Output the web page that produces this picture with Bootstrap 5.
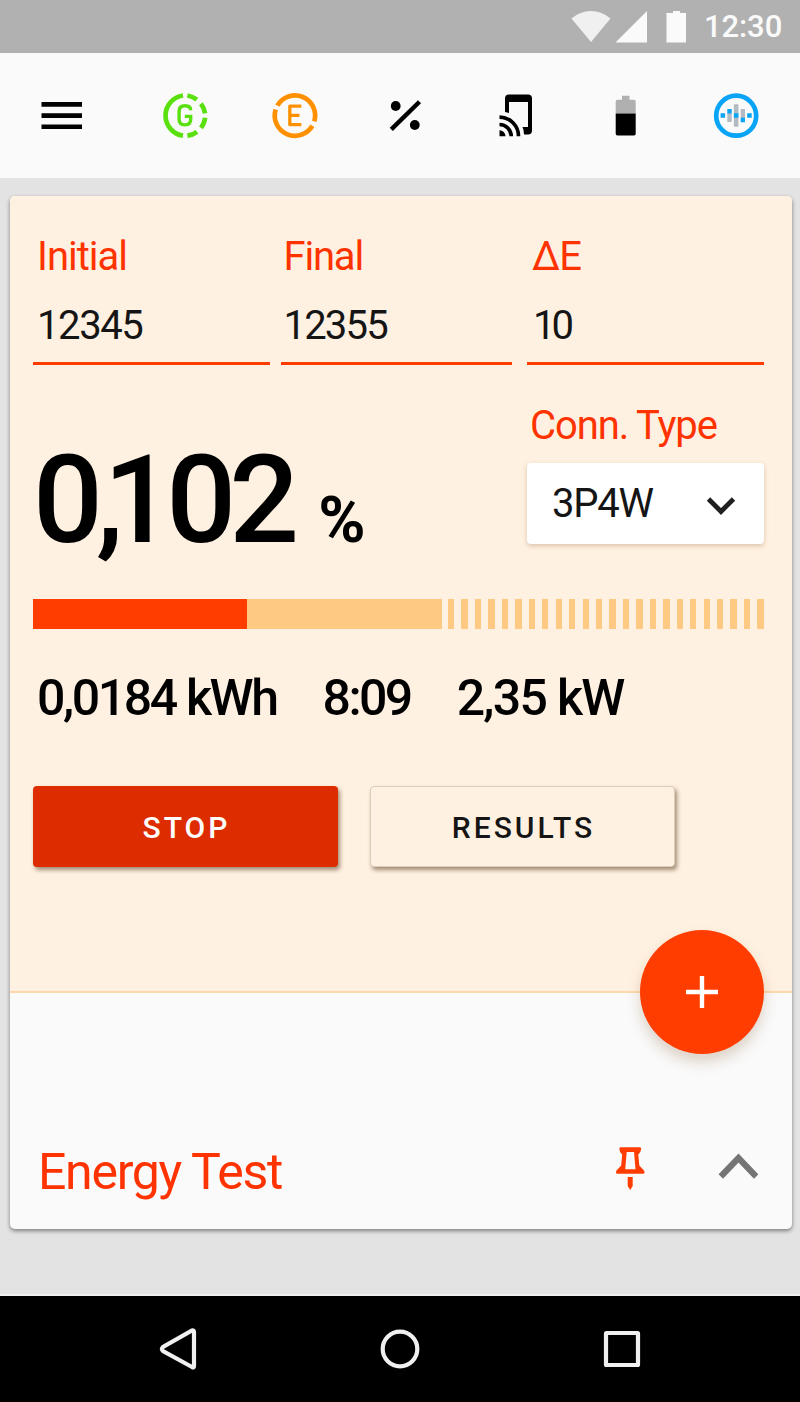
<!DOCTYPE html>
<html lang="en">
<head>
<meta charset="utf-8">
<meta name="viewport" content="width=device-width, initial-scale=1">
<title>Energy Test</title>
<link href="https://cdn.jsdelivr.net/npm/bootstrap@5.3.0/dist/css/bootstrap.min.css" rel="stylesheet">
<style>
:root{--accent:#ff3d00;--cream:#fff1e1;--amber:#fdc983}
body{font-family:Roboto,sans-serif;background:#e3e3e3;color:#000;height:1402px;overflow:hidden}
svg{display:block;flex:none}
.status{height:53px;background:#b1b1b1;color:#fafafa;padding:0 18px 0 571px}
.clock{font-size:31px;font-weight:500;line-height:36px;width:78px;white-space:nowrap;letter-spacing:-.1px}
.tools{height:125px;background:#fafafa;padding:0 42px 0 41px}
.panel{margin:18px 8px 0 10px;height:1033px;border:0;border-radius:5px;background:#fafafa;box-shadow:0 2px 4px rgba(0,0,0,.45)}
.test{height:797px;background:var(--cream);border-bottom:2px solid #fdd9aa;border-radius:5px 5px 0 0;padding:37px 28px 0 23px}
.fields{display:grid;grid-template-columns:237px 231px 237px;column-gap:11px}
.fields>:nth-child(3){margin-left:4px;margin-right:-4px;padding-left:5px}
.field{border-bottom:3px solid var(--accent);height:132px;padding-left:4px}
.fields>:nth-child(2){padding-left:2.5px}
.fields>:nth-child(2) .cap{letter-spacing:-1.2px}
.cap{font-size:40px;line-height:48px;color:#ff3300;letter-spacing:-1px;white-space:nowrap}
.val{font-size:40px;line-height:48px;color:#151515;letter-spacing:-1.4px;margin-top:21px;white-space:nowrap}
.fields>:nth-child(2) .val{letter-spacing:-1.8px}
.fields>:nth-child(3) .val{letter-spacing:-4px;padding-left:1px}
.reading{height:234px}
.big{font-size:123px;font-weight:500;line-height:144px;letter-spacing:-7px;padding-top:63px;white-space:nowrap}
.big .comma{letter-spacing:-20px}
.unit{font-size:64px;font-weight:700;letter-spacing:0;margin-left:2.5px}
.conn{width:237px;padding-top:37px}
.conn .cap{padding-left:3px;letter-spacing:-1.1px}
.picker{height:81px;background:#fff;border-radius:4px;margin-top:13px;padding:1px 28px 0 25px;box-shadow:0 2px 5px rgba(110,60,10,.25)}
.picker .val{letter-spacing:-1.2px}
.picker svg{margin-top:3px}
.bar{height:30px;border-radius:0;background:none;width:731px}
.bar .rest{background:repeating-linear-gradient(90deg,var(--amber) 0 6.3px,transparent 6.3px 13.45px);margin-left:6px}
.stats{font-size:50px;font-weight:500;line-height:58px;letter-spacing:-2.4px;margin-top:40px;padding-left:4px;white-space:nowrap}
.s2{margin-left:46px;letter-spacing:-2.6px}
.s3{margin-left:46px;letter-spacing:-1.7px}
.acts{gap:32px;margin-top:59px}
.act{height:81px;width:305px;font-size:30px;font-weight:500;letter-spacing:3px;border-radius:4px;box-shadow:2px 3px 4px rgba(70,40,10,.5);line-height:36px;padding:3px 0 0 2px}
.act-stop,.act-stop:hover{background:#dd2c00;color:#fff;border:0}
.act-res,.act-res:hover{background:var(--cream);color:#151515;border:1px solid #dccdb9}
.fab{width:124px;height:124px;border-radius:50%;background:var(--accent);right:28px;top:733.5px;border:0;box-shadow:0 8px 14px rgba(120,70,20,.22);padding:0}
.foot{height:236px;padding:132px 34px 0 28px}
.foot .title{font-size:50px;line-height:58px;color:#ff3300;letter-spacing:-1.3px;margin:18px 0 0}
.sysnav{height:108px;margin-top:65px;border-top:2px solid #f0f0f0;background:#000;padding:0 159px}
</style>
</head>
<body>
<header class="status d-flex align-items-center">
 <svg width="115" height="53" viewBox="571 0 115 53"><path d="M571.5 18.5Q580 11 591 11T610.500 18.500L591 42Z" fill="#f0f0f0"/><path d="M647 11V42.500H615.500Z" fill="#fafafa"/><path d="M673 11h7v2h7v29.500h-20.500V13h6.500Z" fill="#fafafa"/></svg>
 <span class="clock ms-auto">12:30</span>
</header>
<nav class="tools d-flex align-items-center justify-content-between">
 <svg width="720" height="60" viewBox="41 86 720 60">
  <path d="M41.500 102h40.500v4.700H41.500zM41.500 113.200h40.500v4.700H41.500zM41.500 124.400h40.500v4.700H41.500z"/>
  <g fill="none" stroke="#5ae00e" stroke-width="4.700">
   <path d="M183 95.500A20.300 20.300 0 0 0 183 135.700"/><path d="M187.400 95.500A20.300 20.300 0 0 1 196.800 99.700M200.900 103.700A20.300 20.300 0 0 1 205.100 113.300M205.100 117.800A20.300 20.300 0 0 1 201 127.900M197 131.800A20.300 20.300 0 0 1 187.400 135.700"/>
   <path d="M190.700 110.300Q190.700 105.700 185 105.700Q179.100 105.700 179.100 111.200V119.300Q179.100 124.900 185 124.900Q190.700 124.900 190.700 119.300V116.400H184.800" stroke-width="3.400"/>
  </g>
  <g fill="none" stroke="#ff9100" stroke-width="4.700"><path d="M277.400 105.600A20.200 20.200 0 0 1 314.300 121.400M312.400 125.800A20.200 20.200 0 0 1 275.700 109.500"/><path d="M301.300 106.200H289.800V124.600H301.300M289.800 115.300H299.500" stroke-width="3.300" stroke-linejoin="round"/></g>
  <g><circle cx="395.700" cy="106" r="4.900"/><circle cx="414.800" cy="125" r="4.900"/><path d="M391.300 129.400L419.500 101.700" stroke="#000" stroke-width="4.400"/></g>
  <g><path d="M505 112V98.500Q505 94.500 509 94.500H528Q532 94.500 532 98.500V130.500Q532 134.500 528 134.500H524Q524 130 522.500 127H528V102H509V113Z"/><path d="M499.500 130.300A6 6 0 0 1 505.500 136.300H499.500Z"/><path d="M499.500 124.500A11.700 11.700 0 0 1 511.200 136.300M499.500 117.200A19 19 0 0 1 518.500 136.300" fill="none" stroke="#000" stroke-width="3.700"/></g>
  <path d="M622 95.800h7.500v4h4.500q1.700 0 1.700 1.700v12h-20v-12q0-1.700 1.700-1.700h4.600z" fill="#b0b0b0"/><path d="M615.700 113.500h20v20.300q0 1.700-1.700 1.700h-16.600q-1.700 0-1.700-1.700z"/>
  <g><circle cx="736.200" cy="115.700" r="20" fill="none" stroke="#08a4f5" stroke-width="4.700"/><path d="M727.300 113h4.400v9h-4.400zM733.900 104.300h4.500v22.500h-4.500zM740.700 109h4.300v9h-4.300z" fill="#b3bbc1"/><path d="M720.600 113.300h4.500v4.500h-4.500zM727.300 109h4.400v4.500h-4.400zM733.900 113.300h4.500v4.500h-4.500zM740.700 117.800h4.300v4.400h-4.300zM747.200 113.300h4.500v4.500h-4.500z" fill="#08a4f5"/></g>
 </svg>
</nav>
<main>
 <section class="card panel position-relative">
  <div class="test">
   <div class="fields">
    <div class="field"><div class="cap">Initial</div><div class="val">12345</div></div>
    <div class="field"><div class="cap">Final</div><div class="val">12355</div></div>
    <div class="field"><div class="cap">ΔE</div><div class="val">10</div></div>
   </div>
   <div class="reading d-flex justify-content-between">
    <div class="big">0<span class="comma">,</span>102 <span class="unit">%</span></div>
    <div class="conn"><div class="cap">Conn. Type</div>
     <div class="picker d-flex align-items-center justify-content-between"><span class="val mt-0">3P4W</span><svg width="30" height="20" viewBox="0 0 30 20"><path d="M2.500 3L15 15.500L27.500 3" fill="none" stroke="#202020" stroke-width="4.800"/></svg></div>
    </div>
   </div>
   <div class="progress bar"><div class="progress-bar" style="width:214px;background:#ff3d00"></div><div class="progress-bar" style="width:195px;background:#fdc983"></div><div class="rest flex-grow-1"></div></div>
   <div class="stats d-flex"><span>0,0184 kWh</span><span class="s2">8:09</span><span class="s3">2,35 kW</span></div>
   <div class="acts d-flex"><button class="btn act act-stop">STOP</button><button class="btn act act-res">RESULTS</button></div>
  </div>
  <button class="btn fab position-absolute d-flex align-items-center justify-content-center" aria-label="Add"><svg width="34" height="34" viewBox="0 0 34 34"><path d="M17 1V33M1 17H33" stroke="#fff" stroke-width="4.400"/></svg></button>
  <div class="foot d-flex align-items-start">
   <h1 class="title fw-normal">Energy Test</h1>
   <svg class="ms-auto" width="144" height="70" viewBox="614 1125 144 70"><path fill-rule="evenodd" d="M620.500 1147.300H640Q641.200 1147.300 641.200 1148.800Q641.200 1151.500 638.300 1154.500L639.300 1165.500L644 1170.500Q645.500 1173.700 643 1173.700H617.500Q615 1173.700 616.500 1170.500L621.200 1165.500L622.200 1154.500Q619.300 1151.500 619.300 1148.800Q619.300 1147.300 620.500 1147.300ZM626.700 1152H634L635.500 1169.300H625.200Z" fill="#ff3d00"/><path d="M627.700 1177h5v9l-2.500 4l-2.500-4z" fill="#ff3d00"/><path d="M720.800 1176.500L738.500 1158L756.200 1176.500" fill="none" stroke="#757575" stroke-width="6.200"/></svg>
  </div>
 </section>
</main>
<footer class="sysnav d-flex align-items-center justify-content-between">
 <svg width="38" height="44" viewBox="159 1327 38 44"><path d="M192 1330.500Q194 1330 194 1332V1366Q194 1368 192 1367L163 1351Q161 1349 163 1347Z" fill="none" stroke="#f0f0f0" stroke-width="4.200"/></svg>
 <svg width="40" height="40" viewBox="0 0 40 40"><circle cx="20" cy="20" r="17.300" fill="none" stroke="#f0f0f0" stroke-width="4.200"/></svg>
 <svg width="38" height="38" viewBox="0 0 38 38"><rect x="3" y="3" width="32" height="32" rx=".5" fill="none" stroke="#f0f0f0" stroke-width="4.200"/></svg>
</footer>
<script src="https://cdn.jsdelivr.net/npm/bootstrap@5.3.0/dist/js/bootstrap.bundle.min.js"></script>
</body>
</html>
